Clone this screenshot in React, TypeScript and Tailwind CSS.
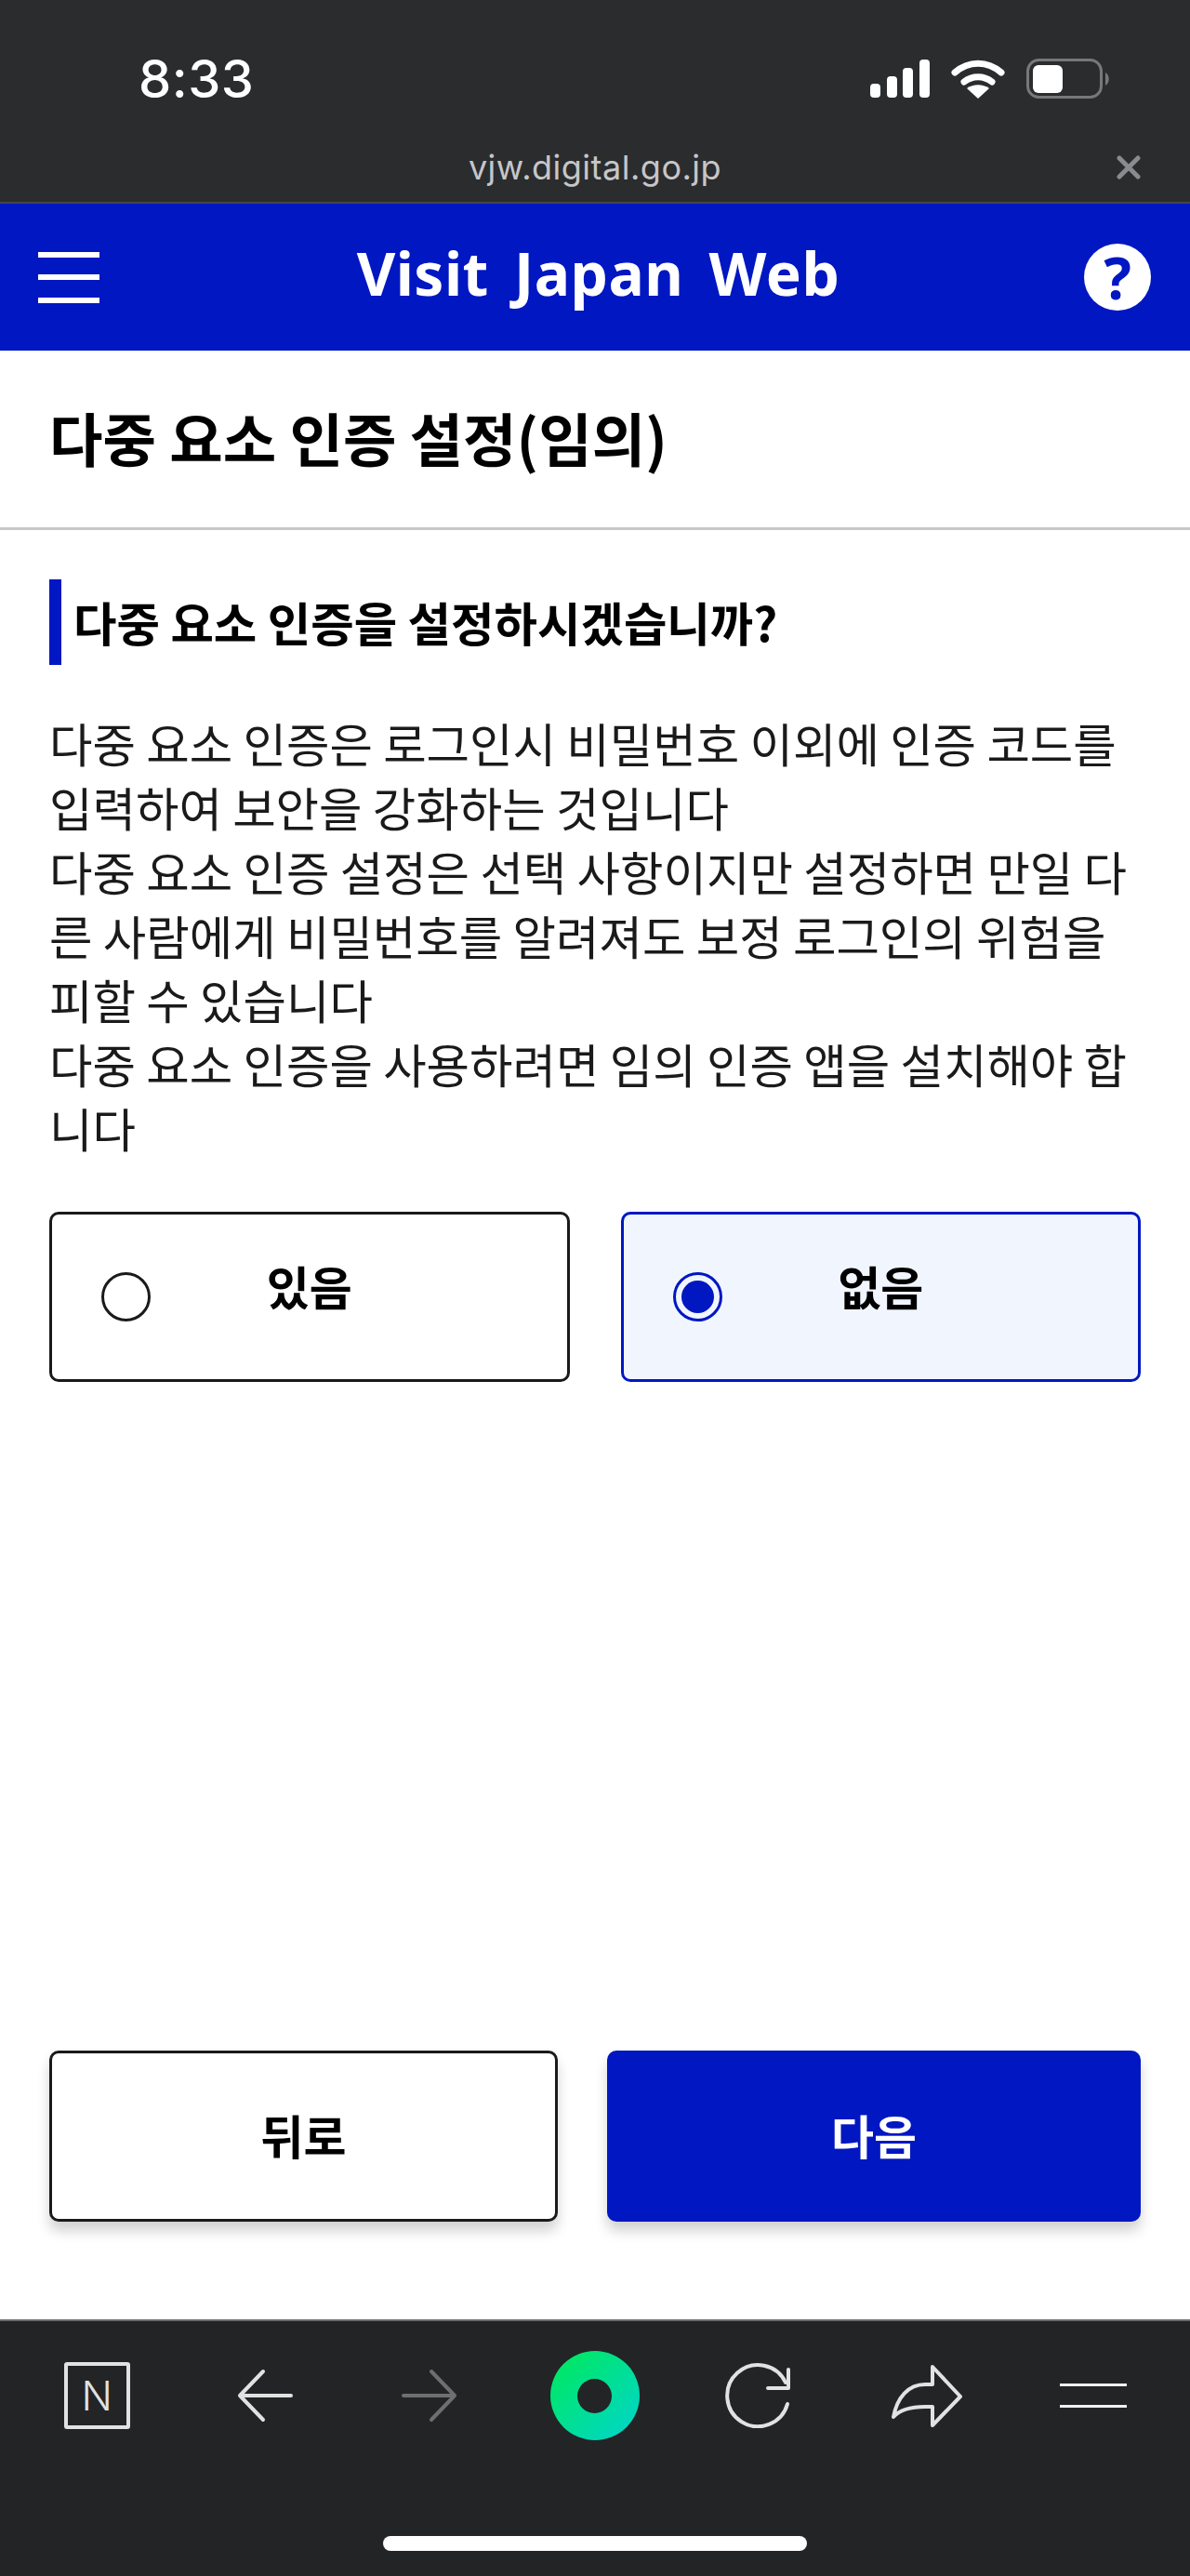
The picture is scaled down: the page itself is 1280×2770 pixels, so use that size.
const KR = { fontFamily: '"Noto Sans CJK KR", "Liberation Sans", sans-serif' };

function Radio({ label, selected }: { label: string; selected?: boolean }) {
  return (
    <div className={selected ? "relative flex h-[183px] flex-1 items-center rounded-[10px] border-[3px] border-[#0017c1] bg-[#f1f5fe]" : "relative flex h-[183px] flex-1 items-center rounded-[10px] border-[3px] border-[#1a1a1a] bg-white"}>
      <div className={selected ? "ml-[53px] flex h-[53px] w-[53px] items-center justify-center rounded-full border-[3px] border-[#0017c1]" : "ml-[53px] flex h-[53px] w-[53px] items-center justify-center rounded-full border-[3px] border-[#1a1a1a]"}>
        {selected && <div className="h-[35px] w-[35px] rounded-full bg-[#0017c1]" />}
      </div>
      <div className="mb-[25px] flex-1 pr-[106px] text-center text-[50px] font-bold leading-[70px] text-black">{label}</div>
    </div>
  );
}

export default function App() {
  return (
    <div className="flex h-[2770px] w-[1280px] flex-col overflow-hidden bg-white" style={KR}>
      <div className="relative h-[219px] shrink-0 border-b-2 border-[#44464c] bg-[#2b2c2e]">
        <div className="absolute left-[149px] top-[50px] text-[56px] font-medium leading-[70px] tracking-[0.5px] text-white" style={{ fontFamily: 'Inter, sans-serif' }}>8:33</div>
        <svg className="absolute left-[930px] top-[60px]" width="268" height="50" viewBox="0 0 268 50" fill="none">
          <rect x="6" y="30" width="11" height="15" rx="4" fill="#fff" /><rect x="24" y="22" width="11" height="23" rx="4" fill="#fff" /><rect x="41" y="13" width="11" height="32" rx="4" fill="#fff" /><rect x="59" y="4" width="11" height="41" rx="4" fill="#fff" />
          <path d="M97 18c15-13 35-13 50 0" stroke="#fff" strokeWidth="7" strokeLinecap="round" /><path d="M107 28c9-7 21-7 30 0" stroke="#fff" strokeWidth="7" strokeLinecap="round" /><path d="M122 46l-12-11c7-5 17-5 24 0z" fill="#fff" />
          <rect x="175.5" y="4.5" width="79" height="40" rx="12" stroke="#77787a" strokeWidth="3" /><rect x="181" y="10" width="32" height="30" rx="6" fill="#fff" /><path d="M259 18c5 3 5 11 0 14z" fill="#77787a" />
        </svg>
        <div className="absolute inset-x-0 top-[155px] text-center text-[36px] leading-[50px] tracking-[0.5px] text-[#c6c6c8]" style={{ fontFamily: 'Inter, sans-serif' }}>vjw.digital.go.jp</div>
        <svg className="absolute left-[1201px] top-[167px]" width="26" height="26" viewBox="0 0 26 26"><path d="M3 3l20 20M23 3L3 23" stroke="#8a8b8d" strokeWidth="5" strokeLinecap="round" /></svg>
      </div>

      <header className="grid h-[158px] shrink-0 grid-cols-[1fr_auto_1fr] items-center bg-[#0017c1] pl-[41px] pr-[42px]">
        <div className="flex h-[55px] w-[66px] flex-col justify-between">
          <div className="h-[6px] bg-white" /><div className="h-[6px] bg-white" /><div className="h-[6px] bg-white" />
        </div>
        <div className="mb-[8px] ml-[8px] text-[64px] font-bold leading-[80px] tracking-[0.5px] text-white [word-spacing:10px]" style={{ fontFamily: '"Noto Sans", sans-serif' }}>Visit Japan Web</div>
        <div className="flex h-[72px] w-[72px] items-center justify-center justify-self-end rounded-full bg-white text-[62px] font-bold leading-none text-[#0017c1]" style={{ fontFamily: '"Noto Sans", sans-serif' }}>?</div>
      </header>

      <div className="flex h-[193px] shrink-0 items-center border-b-[3px] border-[#c8c8c8] px-[53px]">
        <h1 className="mb-[4px] text-[62.5px] font-bold leading-[80px] text-black">다중 요소 인증 설정(임의)</h1>
      </div>

      <main className="flex flex-1 flex-col px-[53px] pt-[53px]">
        <div className="flex h-[92px] items-center border-l-[13px] border-[#0017c1] pl-[13px]">
          <h2 className="mb-[2px] text-[50.5px] font-bold leading-[70px] text-black">다중 요소 인증을 설정하시겠습니까?</h2>
        </div>
        <p className="mt-[49px] text-[50.5px] leading-[69px] text-[#1a1a1a]">
          다중 요소 인증은 로그인시 비밀번호 이외에 인증 코드를 입력하여 보안을 강화하는 것입니다<br />
          다중 요소 인증 설정은 선택 사항이지만 설정하면 만일 다른 사람에게 비밀번호를 알려져도 보정 로그인의 위험을 피할 수 있습니다<br />
          다중 요소 인증을 사용하려면 임의 인증 앱을 설치해야 합니다
        </p>
        <div className="mt-[56px] flex gap-[55px]">
          <Radio label="있음" />
          <Radio label="없음" selected />
        </div>
        <div className="mt-auto mb-[105px] flex gap-[53px]">
          <div className="flex h-[184px] w-[547px] items-center justify-center rounded-[10px] border-[3px] border-[#1a1a1a] bg-white pb-[4px] text-[50px] font-bold text-black shadow-[0_10px_14px_rgba(0,0,0,0.18)]">뒤로</div>
          <div className="flex h-[184px] flex-1 items-center justify-center rounded-[10px] bg-[#0017c1] pb-[4px] text-[50px] font-bold text-white shadow-[0_10px_14px_rgba(0,0,0,0.18)]">다음</div>
        </div>
      </main>

      <footer className="h-[276px] shrink-0 border-t-2 border-[#6a6a6a] bg-[#232426]">
        <div className="grid h-[160px] grid-cols-7 place-items-center px-[15px]">
          <div className="flex h-[72px] w-[71px] items-center justify-center rounded-[3px] border-[4px] border-[#e2e2e2] text-[44px] font-light leading-none text-[#e2e2e2]" style={{ fontFamily: 'Inter, sans-serif' }}>N</div>
          <svg className="ml-[5px]" width="60" height="60" viewBox="0 0 60 60" fill="none" stroke="#e2e2e2" strokeWidth="4" strokeLinecap="round" strokeLinejoin="round"><path d="M28 4L3 30l25 26M3 30h55" /></svg>
          <svg className="ml-[2px]" width="60" height="60" viewBox="0 0 60 60" fill="none" stroke="#6f6f70" strokeWidth="4" strokeLinecap="round" strokeLinejoin="round"><path d="M32 4l25 26-25 26M57 30H2" /></svg>
          <div className="flex h-[96px] w-[96px] items-center justify-center rounded-full bg-[linear-gradient(135deg,#00ea58,#00d4cf)]"><div className="h-[37px] w-[37px] rounded-full bg-[#232426]" /></div>
          <svg className="mr-[7px]" width="72" height="70" viewBox="0 0 72 70" fill="none" stroke="#e2e2e2" strokeWidth="4" strokeLinecap="round" strokeLinejoin="round"><path d="M68 44A33 33 0 1 1 66 21" /><path d="M69 7v20H47" /></svg>
          <svg width="76" height="68" viewBox="0 0 76 68" fill="none" stroke="#e2e2e2" strokeWidth="4" strokeLinejoin="round"><path d="M44 3L74 35L44 66V46H36C22 46 10 48 2 57C6 36 18 22 36 22H44Z" /></svg>
          <div className="flex h-[26px] w-[72px] flex-col justify-between"><div className="h-[3px] bg-[#f0f0f0]" /><div className="h-[3px] bg-[#f0f0f0]" /></div>
        </div>
        <div className="mx-auto mt-[71px] h-[16px] w-[456px] rounded-full bg-white" />
      </footer>
    </div>
  );
}
